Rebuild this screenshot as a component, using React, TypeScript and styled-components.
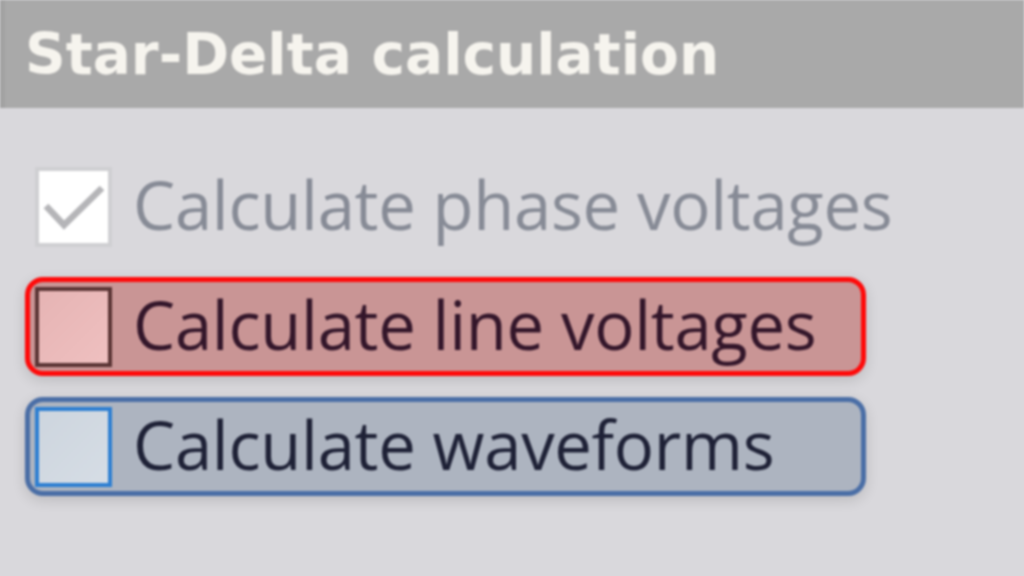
import React from "react";
import styled, { createGlobalStyle } from "styled-components";

const GlobalStyle = createGlobalStyle`
  html, body {
    margin: 0;
    padding: 0;
    background-color: #d9d8dc;
  }
`;

const Page = styled.div`
  width: 1024px;
  height: 576px;
  background-color: #d9d8dc;
  display: flex;
  flex-direction: column;
  overflow: hidden;
  filter: blur(1px);
`;

const Header = styled.div`
  height: 108px;
  background-color: #a9a9a9;
  border-left: 5px solid #a2a2a2;
  box-sizing: border-box;
  display: flex;
  align-items: center;
  padding-left: 20px;
`;

const Title = styled.h1`
  margin: 0;
  font-family: "DejaVu Sans", Verdana, sans-serif;
  font-weight: bold;
  font-size: 56.5px;
  color: #f6f4ee;
`;

const List = styled.div`
  display: flex;
  flex-direction: column;
  gap: 21px;
  padding: 49px 0 0 25px;
`;

type Tone = "plain" | "error" | "focus";

const tones = {
  plain: {
    border: "transparent",
    fill: "transparent",
    shadow: "none",
    boxBorder: "#cfcfd2",
    boxFill: "#ffffff",
    text: "#878b96",
  },
  error: {
    border: "#ff0a0a",
    fill: "#c99595",
    shadow: "0 4px 14px rgba(0, 0, 0, 0.14)",
    boxBorder: "#5a3434",
    boxFill: "linear-gradient(135deg, #e6b4b4, #efc0c0)",
    text: "#33162a",
  },
  focus: {
    border: "#4a6ea6",
    fill: "#adb4c0",
    shadow: "0 4px 14px rgba(0, 0, 0, 0.14)",
    boxBorder: "#2d7fd2",
    boxFill: "linear-gradient(135deg, #cdd5de, #d6dde5)",
    text: "#1e2136",
  },
};

const Row = styled.label<{ $tone: Tone }>`
  width: 841px;
  height: 99px;
  box-sizing: border-box;
  display: flex;
  align-items: center;
  gap: 21px;
  padding-left: 5px;
  border: 5px solid ${(p) => tones[p.$tone].border};
  border-radius: 18px;
  background: ${(p) => tones[p.$tone].fill};
  box-shadow: ${(p) => tones[p.$tone].shadow};
`;

const Box = styled.span<{ $tone: Tone }>`
  width: 77px;
  height: 80px;
  box-sizing: border-box;
  border: 4px solid ${(p) => tones[p.$tone].boxBorder};
  background: ${(p) => tones[p.$tone].boxFill};
  display: flex;
  align-items: center;
  justify-content: center;
  flex-shrink: 0;
`;

const Label = styled.span<{ $tone: Tone }>`
  font-family: "Open Sans", "Noto Sans", sans-serif;
  font-size: 67px;
  line-height: 1;
  letter-spacing: -0.3px;
  color: ${(p) => tones[p.$tone].text};
  margin-top: -4px;
  white-space: nowrap;
`;

const Check = () => (
  <svg width="64" height="50" viewBox="0 0 64 50">
    <path
      d="M4 24 L22 43 L60 6"
      fill="none"
      stroke="#b5b5b8"
      strokeWidth="6.5"
      strokeLinejoin="miter"
    />
  </svg>
);

const options: { text: string; tone: Tone; checked: boolean }[] = [
  { text: "Calculate phase voltages", tone: "plain", checked: true },
  { text: "Calculate line voltages", tone: "error", checked: false },
  { text: "Calculate waveforms", tone: "focus", checked: false },
];

export default function App() {
  return (
    <>
      <GlobalStyle />
      <Page>
        <Header>
          <Title>Star-Delta calculation</Title>
        </Header>
        <List>
          {options.map((o) => (
            <Row key={o.text} $tone={o.tone}>
              <Box $tone={o.tone}>{o.checked && <Check />}</Box>
              <Label $tone={o.tone}>{o.text}</Label>
            </Row>
          ))}
        </List>
      </Page>
    </>
  );
}
